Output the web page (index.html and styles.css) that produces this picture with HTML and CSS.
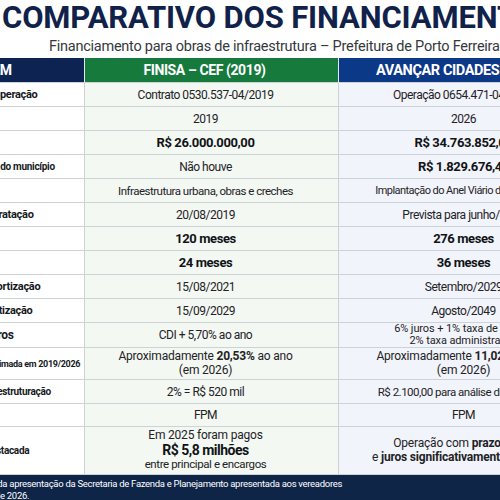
FILE: index.html
```html
<!DOCTYPE html>
<html lang="pt-BR">
<head>
<meta charset="utf-8">
<title>Comparativo dos Financiamentos</title>
<link rel="stylesheet" href="styles.css">
</head>
<body>

<div class="sheet">
  <header class="heading">
    <h1>COMPARATIVO DOS FINANCIAMENTOS</h1>
    <p class="subtitle">Financiamento para obras de infraestrutura – Prefeitura de Porto Ferreira/SP</p>
  </header>

  <table class="compare">
    <colgroup>
      <col class="col-item">
      <col class="col-finisa">
      <col class="col-avancar">
    </colgroup>
    <thead>
      <tr>
        <th class="head-item">ITEM</th>
        <th class="head-finisa">FINISA – CEF (2019)</th>
        <th class="head-avancar">AVANÇAR CIDADES (2026)</th>
      </tr>
    </thead>
    <tbody>
      <tr>
        <td>Número da operação</td>
        <td>Contrato 0530.537-04/2019</td>
        <td>Operação 0654.471-04/2026</td>
      </tr>
      <tr>
        <td>Ano</td>
        <td>2019</td>
        <td>2026</td>
      </tr>
      <tr>
        <td>Valor</td>
        <td class="strong">R$ 26.000.000,00</td>
        <td class="strong">R$ 34.763.852,00</td>
      </tr>
      <tr>
        <td class="small">Contrapartida do município</td>
        <td>Não houve</td>
        <td class="strong">R$ 1.829.676,40</td>
      </tr>
      <tr>
        <td>Finalidade</td>
        <td class="compact">Infraestrutura urbana, obras e creches</td>
        <td class="narrow">Implantação do Anel Viário do município</td>
      </tr>
      <tr>
        <td>Data de contratação</td>
        <td>20/08/2019</td>
        <td>Prevista para junho/2026</td>
      </tr>
      <tr>
        <td>Prazo total</td>
        <td class="strong">120 meses</td>
        <td class="strong">276 meses</td>
      </tr>
      <tr>
        <td>Carência</td>
        <td class="strong">24 meses</td>
        <td class="strong">36 meses</td>
      </tr>
      <tr>
        <td>Início da amortização</td>
        <td>15/08/2021</td>
        <td>Setembro/2029</td>
      </tr>
      <tr>
        <td>Fim da amortização</td>
        <td>15/09/2029</td>
        <td>Agosto/2049</td>
      </tr>
      <tr>
        <td class="large">Taxas de juros</td>
        <td>CDI + 5,70% ao ano</td>
        <td class="tiny">6% juros + 1% taxa de risco +<br>2% taxa administrativa</td>
      </tr>
      <tr class="row-two">
        <td class="mini">Taxa efetiva estimada em 2019/2026</td>
        <td class="lines">Aproximadamente <b>20,53%</b> ao ano<br>(em 2026)</td>
        <td class="lines">Aproximadamente <b>11,02%</b> ao ano<br>(em 2026)</td>
      </tr>
      <tr>
        <td class="small">Comissão de estruturação</td>
        <td>2% = R$ 520 mil</td>
        <td class="compact">R$ 2.100,00 para análise da proposta</td>
      </tr>
      <tr class="row-short">
        <td>Garantia</td>
        <td>FPM</td>
        <td>FPM</td>
      </tr>
      <tr class="row-tall">
        <td class="small">Vantagem destacada</td>
        <td class="lines">Em 2025 foram pagos<br><span class="big">R$ 5,8 milhões</span><br><span class="fine">entre principal e encargos</span></td>
        <td class="lines">Operação com <b>prazo maior</b><br>e <b>juros significativamente menores</b></td>
      </tr>
    </tbody>
  </table>

  <footer class="source">
    Fonte: dados da apresentação da Secretaria de Fazenda e Planejamento apresentada aos vereadores<br>
    em fevereiro de 2026.
  </footer>
</div>

</body>
</html>
```

FILE: styles.css
```css
body {
  margin: 0;
  background-color: #ffffff;
  font-family: "Roboto", "Liberation Sans", sans-serif;
  color: #1f2226;
  overflow: hidden;
}

.sheet {
  width: 671px;
  margin-left: -71px;
}

.heading {
  padding-left: 73px;
  white-space: nowrap;
}

.heading h1 {
  margin: 3px 0 0;
  font-size: 31px;
  line-height: 30px;
  font-weight: 700;
  letter-spacing: -0.15px;
  color: #10224a;
}

.subtitle {
  margin: 5px 0 2px;
  padding-left: 47px;
  font-size: 14.5px;
  line-height: 18px;
  letter-spacing: -0.25px;
  color: #34383d;
}

/* Comparison table */
.compare {
  width: 671px;
  table-layout: fixed;
  border-collapse: collapse;
}

.col-item {
  width: 155px;
}

.col-finisa {
  width: 254px;
}

.col-avancar {
  width: 262px;
}

.compare th {
  height: 24px;
  padding: 0 14px 0 0;
  font-size: 14px;
  font-weight: 700;
  letter-spacing: -0.4px;
  color: #ffffff;
  text-align: center;
  white-space: nowrap;
  overflow: hidden;
  border-left: 1px solid #e6e9ec;
}

.compare th.head-item {
  background-color: #0d2352;
  padding-right: 22px;
}

.head-finisa {
  background-color: #167a3d;
}

.compare th.head-avancar {
  background-color: #0c3888;
  padding-right: 20px;
  font-size: 14.5px;
}

.compare tr {
  height: 24px;
}

.compare td {
  padding: 0 14px 0 2px;
  border: 1px solid #cdd2d6;
  font-size: 12px;
  line-height: 14px;
  letter-spacing: -0.5px;
  text-align: center;
  white-space: nowrap;
  overflow: hidden;
}

.compare td:first-child {
  padding: 0 0 0 10px;
  text-align: left;
  font-weight: 700;
  font-size: 11px;
  letter-spacing: -0.3px;
  color: #16191d;
  background-color: #ffffff;
}

.compare td:nth-child(2) {
  background-color: #f3f8f3;
}

.compare td:nth-child(3) {
  background-color: #f1f4fa;
}

.compare td.small {
  font-size: 10px;
}

.compare td.large {
  font-size: 12px;
}

.compare td.mini {
  font-size: 9px;
}

.compare td.strong {
  font-size: 13px;
  font-weight: 700;
  letter-spacing: -0.4px;
  color: #111316;
}

.compare td.compact {
  font-size: 11.5px;
}

.compare td.narrow {
  font-size: 11px;
  letter-spacing: -0.55px;
}

.compare td.tiny {
  font-size: 11px;
  line-height: 12px;
  letter-spacing: -0.1px;
}

.compare td.lines {
  font-size: 12px;
  line-height: 13.5px;
  letter-spacing: -0.2px;
}

.compare tr.row-two {
  height: 32px;
}

.compare tr.row-short {
  height: 23px;
}

.compare tr.row-tall {
  height: 48px;
}

.big {
  font-size: 14px;
  font-weight: 700;
  letter-spacing: -0.5px;
  line-height: 15px;
  color: #111316;
}

.fine {
  font-size: 11.5px;
  letter-spacing: -0.4px;
}

.source {
  padding: 3px 0 8px 15px;
  background-color: #0f2548;
  color: #ffffff;
  font-size: 9.5px;
  line-height: 12px;
  letter-spacing: -0.3px;
  white-space: nowrap;
}
```
